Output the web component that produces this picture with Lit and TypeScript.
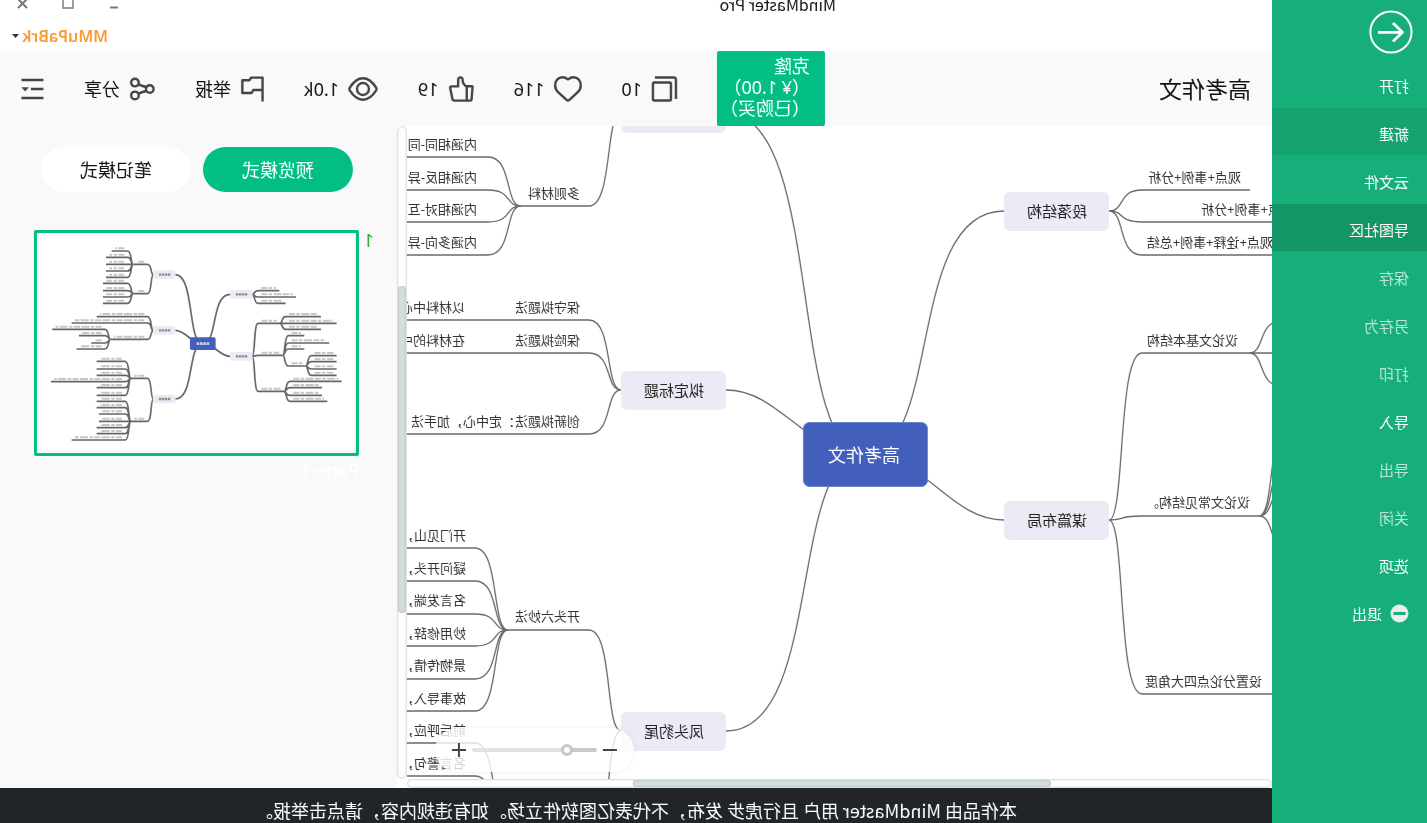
import { LitElement, html, svg, css } from "lit";
import { customElement, property } from "lit/decorators.js";
import { classMap } from "lit/directives/class-map.js";
import { styleMap } from "lit/directives/style-map.js";

type Point = [number, number];

/* Smooth connector that leaves and arrives horizontally. */
const curve = (a: Point, b: Point, out = 0.5, into = 0.75) => {
  const dx = b[0] - a[0];
  return `M${a[0]} ${a[1]}C${a[0] + dx * out} ${a[1]} ${b[0] - dx * into} ${b[1]} ${b[0]} ${b[1]}`;
};

/* Connector from the central topic: flatter when the branch lies close in height. */
const trunk = (a: Point, b: Point) =>
  Math.abs(b[1] - a[1]) < 80 ? curve(a, b, 0.43, 0.39) : curve(a, b, 0.56, 0.71);

/* A fan of connectors from one origin, each running on as an underline. */
const fan = (from: Point, bend: number, leaves: [number, number][]) =>
  leaves.map(([y, end]) => `${curve(from, [bend, y])}H${end}`).join("");

/* ---------- document data ---------- */

const ORIGIN: Point = [155, 126];
const CENTER: Point = [562, 454];

const BRANCHES = [
  { x: 318, y: 192, text: "段落结构" },
  { x: 318, y: 501, text: "谋篇布局" },
  { x: 701, y: 94, text: "审题立意" },
  { x: 701, y: 371, text: "拟定标题" },
  { x: 701, y: 712, text: "凤头豹尾" },
];

const LINKS = [
  fan([318, 211], 285, [[190, 177], [222, 60], [255, 100]]),
  fan([318, 520], 285, [[353, 178], [516, 168], [694, 140]]),
  fan([178, 353], 145, [[321, 60], [353, 60], [386, 60]]),
  fan([168, 516], 135, [[416, 60], [454, 60], [484, 60], [552, 60]]),
  fan([806, 113], 838, [[206, 907]]),
  fan([906, 206], 939, [[157, 1100], [190, 1100], [222, 1100], [255, 1100]]),
  fan([806, 390], 838, [[320, 1100], [353, 1100], [434, 1100]]),
  fan([806, 731], 838, [[630, 920], [841, 920]]),
  fan([919, 630], 952, [[548, 1100], [581, 1100], [614, 1100], [646, 1100], [679, 1100], [711, 1100]]),
  fan([919, 841], 952, [[743, 1100], [776, 1100], [809, 1100], [841, 1100]]),
];

const LABELS: [number, number, string][] = [
  [186, 177, "观点+事例+分析"],
  [133, 209, "观点+事例+分析"],
  [154, 242, "观点+诠释+事例+总结"],
  [189, 340, "议论文基本结构"],
  [177, 502, "议论文常见结构。"],
  [165, 681, "设置分论点四大角度"],
  [847, 193, "多则材料"],
  [950, 144, "内涵相同-同"],
  [950, 177, "内涵相反-异"],
  [950, 209, "内涵相对-互补"],
  [950, 242, "内涵多向-异"],
  [847, 307, "保守拟题法"],
  [962, 307, "以材料中心"],
  [847, 340, "保险拟题法"],
  [962, 340, "在材料的中"],
  [847, 421, "创新拟题法：定中心，加手法"],
  [847, 616, "开头六妙法"],
  [961, 535, "开门见山，"],
  [961, 568, "疑问开头，"],
  [961, 600, "名言发端，"],
  [961, 633, "妙用修辞，"],
  [961, 665, "景物传情，"],
  [961, 698, "故事导入，"],
  [961, 730, "前后呼应，"],
  [961, 763, "名言警句，"],
];

/* Page overview: origin, bend, then [y, end] for every leaf. */
const OVERVIEW: { from: Point; bend: number; leaves: [number, number][] }[] = [
  { from: [697, 223], bend: 714, leaves: [[212, 778], [231, 828], [250, 797]] },
  { from: [697, 409], bend: 714, leaves: [[310, 780], [406, 788], [514, 792]] },
  { from: [780, 310], bend: 797, leaves: [[290, 903], [310, 950], [328, 903]] },
  { from: [788, 406], bend: 805, leaves: [[347, 853], [369, 928], [387, 853], [438, 857]] },
  { from: [857, 438], bend: 874, leaves: [[407, 950], [425, 950], [447, 950], [466, 950]] },
  { from: [792, 514], bend: 810, leaves: [[484, 965], [503, 906], [526, 906], [544, 922]] },
  { from: [400, 164], bend: 383, leaves: [[133, 340], [221, 340]] },
  { from: [340, 133], bend: 323, leaves: [[93, 275], [112, 258], [133, 258], [153, 258], [172, 258]] },
  { from: [340, 221], bend: 323, leaves: [[190, 249], [212, 249], [231, 249], [250, 249]] },
  { from: [400, 331], bend: 383, leaves: [[290, 230], [309, 155], [358, 272]] },
  { from: [272, 358], bend: 255, leaves: [[328, 97], [347, 177], [369, 214], [387, 170]] },
  { from: [400, 537], bend: 383, leaves: [[475, 333], [604, 333]] },
  { from: [333, 475], bend: 316, leaves: [[424, 230], [447, 230], [466, 230], [485, 93], [503, 230], [526, 230]] },
  { from: [333, 604], bend: 316, leaves: [[544, 230], [563, 230], [582, 237], [604, 237], [623, 230], [641, 230], [660, 155]] },
];
const OVERVIEW_BRANCHES: Point[] = [[631, 210], [631, 396], [400, 151], [400, 318], [400, 524]];

const MENU = [
  { text: "打开" },
  { text: "新建", tone: "hover" },
  { text: "云文件" },
  { text: "导图社区", tone: "current" },
  { text: "保存", off: true },
  { text: "另存为", off: true },
  { text: "打印", off: true },
  { text: "导入" },
  { text: "导出", off: true },
  { text: "关闭", off: true },
  { text: "选项" },
  { text: "退出", icon: true },
];

const ICONS = {
  copy: { w: 26, h: 26, art: svg`<rect x="6" y="6.5" width="18" height="18" rx="1.5"/><path d="M22 1.5H3a2 2 0 0 0-2 2V23"/>` },
  heart: { w: 28, h: 26, art: svg`<path d="M14 3.4C11.8 1.6 10.2 1.2 8.4 1.2C4.2 1.2 1.2 4.6 1.2 9.4C1.2 12.4 2.6 14.6 4.4 16.4L12.6 23.8Q14 25 15.4 23.8L23.6 16.4C25.4 14.6 26.8 12.4 26.8 9.4C26.8 4.6 23.8 1.2 19.6 1.2C17.8 1.2 16.2 1.6 14 3.4Z"/>` },
  like: { w: 26, h: 26, art: svg`<path d="M7.2 10.2H2.2q-.9 0-.8 1L2.4 23.6q.1 1 1 1H7.2ZM7.2 10.6C9.4 9.4 11.4 6.8 11.4 3.4C11.4 .6 15.8 .6 15.8 4.2V10.4H22.6q1.4 0 1.2 1.4L21.6 22.8Q21.2 24.6 19.4 24.6H7.2"/>` },
  eye: { w: 30, h: 24, art: svg`<path d="M1.8 10.6C6 4 10.4 1.2 15 1.2S24 4 28.2 10.6Q29 12 28.2 13.4C24 20 19.6 22.8 15 22.8S6 20 1.8 13.4Q1 12 1.8 10.6Z"/><circle cx="15" cy="12" r="6"/>` },
  flag: { w: 24, h: 26, art: svg`<path d="M1.4 25.4V1.6H12.6L14.6 4.2H21.6V17H12.4L10.6 14H1.4"/>` },
  share: { w: 26, h: 24, art: svg`<circle cx="5.2" cy="12" r="3.8"/><circle cx="20" cy="5.6" r="3.8"/><circle cx="20" cy="18.4" r="3.8"/><path d="M8.6 10C11 9.6 13.5 8.8 16.4 7.4M8.6 14C11 14.4 13.5 15.2 16.4 16.6"/>` },
  outline: { w: 23, h: 22, art: svg`<path d="M.5 2H22.5M.5 11H13M.5 20H22.5"/><path class="solid" d="M15 9.2H22.5L18.8 13.4Z"/>` },
};

/* ---------- elements ---------- */

@customElement("tool-icon")
class ToolIcon extends LitElement {
  @property() name: keyof typeof ICONS = "copy";
  static styles = css`
    :host { display: flex; }
    svg { display: block; overflow: visible; fill: none; stroke: #444; stroke-width: 2.4; stroke-linejoin: round; }
    .solid { fill: #444; stroke: none; }
  `;
  render() {
    const i = ICONS[this.name];
    return html`<svg width=${i.w} height=${i.h} viewBox="0 0 ${i.w} ${i.h}" aria-hidden="true">${i.art}</svg>`;
  }
}

@customElement("side-menu")
class SideMenu extends LitElement {
  static styles = css`
    :host { display: block; width: 155px; flex: none; background: #16af79; color: #fff; }
    button { font: inherit; color: inherit; border: 0; background: none; padding: 0; }
    .back { display: block; margin: 10px 0 6px 14px; height: 44px; width: 44px; }
    svg { display: block; }
    .ring { fill: none; stroke: #fff; stroke-width: 2; }
    .arrow { fill: none; stroke: #fff; stroke-width: 2.8; stroke-linejoin: round; }
    ul { list-style: none; margin: 0; padding: 0; display: flex; flex-direction: column; gap: 1px; }
    .item {
      display: flex; align-items: center; gap: 8px; width: 100%; height: 47px; box-sizing: border-box;
      padding: 4px 18px 0; font-size: 15px; line-height: 20px; text-align: left;
    }
    .hover { background: #15a370; }
    .current { background: #139565; }
    .item:disabled { color: #b9e6d6; }
  `;
  render() {
    return html`
      <button class="back" aria-label="返回">
        <svg width="44" height="44" viewBox="0 0 44 44">
          <circle class="ring" cx="22" cy="22" r="20.6" />
          <path class="arrow" d="M35 22.3H11M20 13L10.5 22.3L20 31.6" />
        </svg>
      </button>
      <ul>
        ${MENU.map((m) => html`<li>
          <button class=${classMap({ item: true, hover: m.tone === "hover", current: m.tone === "current" })} ?disabled=${m.off}>
            ${m.icon
              ? html`<svg width="19" height="19" viewBox="0 0 19 19" aria-hidden="true">
                  <circle cx="9.5" cy="9.5" r="9" fill="#ececec" /><rect x="3.5" y="8" width="12" height="3" fill="#16af79" />
                </svg>`
              : ""}${m.text}
          </button>
        </li>`)}
      </ul>
    `;
  }
}

@customElement("scroll-track")
class ScrollTrack extends LitElement {
  @property({ type: Number }) before = 0;
  @property({ type: Number }) size = 1;
  @property({ type: Number }) after = 0;
  static styles = css`
    :host { display: flex; box-sizing: border-box; border: 1px solid #dedede; border-radius: 5px; background: #fff; box-shadow: inset 0 0 2px #ddd; }
    :host([vertical]) { flex-direction: column; }
    .thumb { background: #d3dddd; border-radius: 5px; box-shadow: inset 0 0 2px #98aaaa; }
  `;
  render() {
    return html`<div style=${styleMap({ flexGrow: String(this.before) })}></div>
      <div class="thumb" style=${styleMap({ flexGrow: String(this.size) })}></div>
      <div style=${styleMap({ flexGrow: String(this.after) })}></div>`;
  }
}

@customElement("mind-map")
class MindMap extends LitElement {
  static styles = css`
    :host { display: block; position: relative; overflow: hidden; background: #fff; min-width: 0; min-height: 0; contain: size; }
    .sheet { display: block; width: 100%; height: 100%; font-family: "Noto Sans", "Noto Sans CJK SC", sans-serif; }
    .link { fill: none; stroke: #6a6a6a; stroke-width: 1.3; }
    .branch { fill: #eaebf4; }
    .root { fill: #425fbb; stroke: #6d84cb; stroke-width: 1; }
    .t13 { font-size: 13px; fill: #333; }
    .t15 { font-size: 15px; fill: #222; text-anchor: middle; }
    .t18 { font-size: 18px; fill: #fff; text-anchor: middle; }
    .zoom {
      position: absolute; right: 28px; bottom: 7px; display: flex; align-items: center; gap: 6px;
      height: 44px; padding: 0 17px; border-radius: 22px; background: rgba(255, 255, 255, 0.8);
      box-shadow: 0 0 5px rgba(0, 0, 0, 0.08);
    }
    .zoom button { border: 0; background: none; padding: 0; display: flex; }
    .zoom path { stroke: #444; stroke-width: 2; }
    input { appearance: none; width: 125px; height: 14px; margin: 0; background: none; }
    input::-webkit-slider-runnable-track {
      height: 4px; border-radius: 2px; background: linear-gradient(to right, #c9c9c9 24%, #e2e2e2 24%);
    }
    input::-webkit-slider-thumb {
      appearance: none; width: 12px; height: 12px; margin-top: -4px; box-sizing: border-box;
      border: 3px solid #c6c6c6; border-radius: 50%; background: #fff;
    }
  `;
  render() {
    const anchors: Point[] = [[423, 211], [423, 520], [701, 113], [701, 390], [701, 731]];
    return html`
      <svg class="sheet">
        <g transform="translate(${-ORIGIN[0]} ${-ORIGIN[1]})">
          ${anchors.map((a) => svg`<path class="link" d=${trunk(CENTER, a)} />`)}
          ${LINKS.map((d) => svg`<path class="link" d=${d} />`)}
          ${BRANCHES.map((b) => svg`
            <rect class="branch" x=${b.x} y=${b.y} width="105" height="39" rx="6" />
            <text class="t15" x=${b.x + 52} y=${b.y + 25}>${b.text}</text>`)}
          <rect class="root" x="499.5" y="422.5" width="124" height="64" rx="6" />
          <text class="t18" x="563" y="462">高考作文</text>
          ${LABELS.map(([x, y, t]) => svg`<text class="t13" x=${x} y=${y + 5}>${t}</text>`)}
        </g>
      </svg>
      <div class="zoom">
        <button aria-label="缩小"><svg width="14" height="14"><path d="M0 7H14" /></svg></button>
        <input type="range" min="0" max="100" value="21" aria-label="缩放" />
        <button aria-label="放大"><svg width="14" height="14"><path d="M0 7H14M7 0V14" /></svg></button>
      </div>
    `;
  }
}

@customElement("page-panel")
class PagePanel extends LitElement {
  static styles = css`
    :host { display: block; background: #f9f9f9; min-width: 0; }
    button { font: inherit; border: 0; padding: 0; }
    .modes { display: flex; gap: 12px; padding: 21px 0 0 44px; }
    .mode { width: 150px; height: 45px; border-radius: 23px; background: #fff; color: #111; font-size: 18px; line-height: 24px; }
    .mode.on { background: #02be85; color: #fff; }
    .page { display: grid; grid-template-columns: 10px 325px; column-gap: 5px; padding: 38px 0 0 23px; }
    .index { color: #28a745; font-size: 18px; line-height: 20px; }
    .preview { display: block; box-sizing: border-box; width: 325px; height: 226px; border: 3px solid #02be85; border-radius: 2px; background: #fafafa; }
    .preview svg { display: block; width: 100%; height: 100%; }
    .name { grid-column: 2; color: #fff; font-size: 18px; line-height: 22px; margin-top: 3px; }
    .line { fill: none; stroke: #666; stroke-width: 5; }
    .words { stroke: #c6c6c6; stroke-width: 6; stroke-dasharray: 18 4 10 5 24 4; }
    .dark { stroke: #8a8a8a; stroke-width: 7; stroke-dasharray: 7 2; }
    .light { stroke: #fff; stroke-width: 8; stroke-dasharray: 8 2; opacity: 0.7; }
  `;
  render() {
    const links: [Point, Point][] = [
      [[548, 371], [631, 223]], [[548, 371], [631, 409]],
      [[548, 371], [466, 164]], [[548, 371], [466, 331]], [[548, 371], [466, 537]],
    ];
    return html`
      <div class="modes">
        <button class="mode on">预览模式</button>
        <button class="mode">笔记模式</button>
      </div>
      <div class="page">
        <span class="index">1</span>
        <button class="preview" aria-label="Page-1">
          <svg viewBox="51 39 957 660">
            <g transform="translate(1059 0) scale(-1 1)">
              <rect x="62" y="50" width="938" height="640" fill="#fff" />
              ${links.map(([a, b]) => svg`<path class="line" d=${trunk(a, b)} />`)}
              ${OVERVIEW.map((f) => svg`
                <path class="line" d=${fan(f.from, f.bend, f.leaves)} />
                ${f.leaves.map(([y, end]) => {
                  const s = Math.sign(end - f.bend);
                  return svg`<path class="words" d="M${f.bend + s * 10} ${y - 8}H${end - s * 10}" />`;
                })}`)}
              ${OVERVIEW_BRANCHES.map(([x, y]) => svg`
                <rect x=${x} y=${y} width="66" height="26" rx="5" fill="#eaebf4" />
                <path class="dark" d="M${x + 17} ${y + 13}h34" />`)}
              <rect x="510" y="352" width="77" height="38" rx="5" fill="#425fbb" />
              <path class="light" d="M530 371h38" />
            </g>
          </svg>
        </button>
        <span class="name">Page-1</span>
      </div>
    `;
  }
}

@customElement("app-root")
class AppRoot extends LitElement {
  static styles = css`
    :host { display: block; overflow: hidden; font-family: "Noto Sans", "Noto Sans CJK SC", sans-serif; color: #111; background: #fff; }
    button { font: inherit; color: inherit; border: 0; background: none; padding: 0; }
    .window { display: flex; height: 100vh; transform: scaleX(-1); }
    .main { flex: 1; min-width: 0; display: flex; flex-direction: column; }

    .titlebar { height: 51px; flex: none; }
    .caption { display: flex; align-items: center; height: 20px; margin-top: -6px; padding: 0 15px 0 436px; }
    .app-name { flex: 1; font-family: "Noto Sans CJK SC", sans-serif; font-size: 16px; line-height: 20px; }
    .controls { display: flex; gap: 32px; }
    .controls svg { display: block; fill: none; stroke: #777; stroke-width: 2; }
    .account { display: flex; justify-content: flex-end; padding: 12px 12px 0 0; }
    .user { display: flex; align-items: center; gap: 3px; color: #fb9a35; font-size: 16px; font-weight: 600; line-height: 20px; }

    .toolbar { display: flex; align-items: center; height: 75px; flex: none; background: #f9f9f9; padding: 0 21px 0 21px; }
    h1 { margin: 0; font-size: 23px; line-height: 30px; font-weight: 400; flex: 1; }
    .clone { background: #02be85; color: #fff; width: 108px; height: 75px; padding: 0 0 2px 15px; box-sizing: border-box; border-radius: 2px; font-size: 18px; line-height: 21px; text-align: left; white-space: pre-line; }
    .tools { display: flex; align-items: center; gap: 40px; margin-left: 40px; }
    .tool { display: flex; align-items: center; gap: 9px; font-size: 18px; line-height: 24px; }

    .body { flex: 1; min-height: 0; display: grid; grid-template-columns: minmax(0, 1fr) 10px 397px; grid-template-rows: minmax(0, 1fr) 9px; }
    .panel { grid-row: span 2; }
    footer { height: 35px; flex: none; display: flex; align-items: center; justify-content: center; padding-top: 8px; box-sizing: border-box; background: #212527; color: #fff; font-family: "Noto Sans CJK SC", sans-serif; font-size: 18px; line-height: 24px; white-space: nowrap; }
  `;
  render() {
    const tools: [keyof typeof ICONS, string][] = [
      ["copy", "10"], ["heart", "116"], ["like", "19"], ["eye", "1.0k"], ["flag", "举报"], ["share", "分享"],
    ];
    return html`
      <div class="window">
        <side-menu></side-menu>
        <div class="main">
          <header class="titlebar">
            <div class="caption">
              <span class="app-name">MindMaster Pro</span>
              <div class="controls">
                <button aria-label="最小化"><svg width="14" height="14"><path d="M3 10.5H11" /></svg></button>
                <button aria-label="最大化"><svg width="14" height="14"><path stroke-width="1.4" d="M2 1H12V11H2Z" /></svg></button>
                <button aria-label="关闭"><svg width="14" height="14"><path d="M2 2L11 11M11 2L2 11" /></svg></button>
              </div>
            </div>
            <div class="account">
              <button class="user">MMuPaBrk<svg width="7" height="5" aria-hidden="true"><path d="M0 0H7L3.5 4Z" fill="#333" /></svg></button>
            </div>
          </header>
          <div class="toolbar">
            <h1>高考作文</h1>
            <button class="clone">克隆${"\n"}（¥ 1.00）${"\n"}（已购买）</button>
            <div class="tools">
              ${tools.map(([icon, text]) => html`<button class="tool"><tool-icon name=${icon}></tool-icon>${text}</button>`)}
              <button class="tool" aria-label="目录"><tool-icon name="outline"></tool-icon></button>
            </div>
          </div>
          <div class="body">
            <mind-map></mind-map>
            <scroll-track vertical before="159" size="328" after="166"></scroll-track>
            <page-panel class="panel"></page-panel>
            <scroll-track before="220" size="419" after="225"></scroll-track>
          </div>
          <footer>本作品由 MindMaster 用户 且行虎步 发布，不代表亿图软件立场。如有违规内容，请点击举报。</footer>
        </div>
      </div>
    `;
  }
}
